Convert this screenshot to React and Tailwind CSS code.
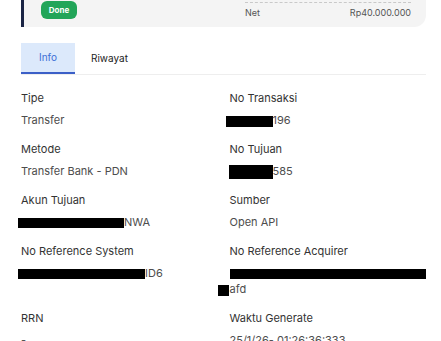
const Redact = ({ className }) => (
  <span className={`inline-block bg-black align-middle ${className}`}></span>
)

const Field = ({ label, children }) => (
  <div>
    <div className="text-[11px] leading-[17px] text-[#333]">{label}</div>
    <div className="mt-[5px] text-[11px] leading-[17px] text-[#4d4d4d]">{children}</div>
  </div>
)

const App = () => {
  return (
    <div className="w-[441px] h-[341px] overflow-hidden bg-white font-['Inter',sans-serif]">
      <div className="pl-[21px] pr-[15px]">
        {/* Summary card (scrolled) */}
        <div className="h-[27px] flex justify-between bg-[#f4f4f4] border-l-[3px] border-[#1b2545] rounded-br-xl pl-[17px] pr-[15px]">
          <div className="mt-[1px] h-[18px] w-[36px] rounded-md bg-[#22a559] flex items-center justify-center text-[8px] font-bold text-white">
            Done
          </div>
          <div className="w-[166px] mt-[2px]">
            <div className="border-t border-dashed border-[#c9c9c9]"></div>
            <div className="flex justify-between text-[9px] leading-[12px] text-[#555] mt-[4px]">
              <span>Net</span>
              <span>Rp40.000.000</span>
            </div>
          </div>
        </div>

        {/* Tabs */}
        <div className="mt-[16px] flex border-b border-[#eeeeee]">
          <div className="h-[31px] w-[54px] bg-[#dce9fb] border-b-2 border-[#3b5fc7] flex items-center justify-center text-[10px] text-[#3d6fd6] -mb-px">
            Info
          </div>
          <div className="h-[31px] px-[16px] flex items-center text-[10px] text-[#222]">
            Riwayat
          </div>
        </div>

        {/* Fields */}
        <div className="mt-[15px] grid grid-cols-2 gap-x-3 gap-y-[12px]">
          <Field label="Tipe">Transfer</Field>
          <Field label="No Transaksi">
            <Redact className="w-[47px] h-[11px] -ml-[4px]" />196
          </Field>
          <Field label="Metode">Transfer Bank - PDN</Field>
          <Field label="No Tujuan">
            <Redact className="w-[44px] h-[14px] -ml-[1px]" />585
          </Field>
          <Field label="Akun Tujuan">
            <Redact className="w-[106px] h-[10px] -ml-[3px]" />NWA
          </Field>
          <Field label="Sumber">Open API</Field>
          <Field label="No Reference System">
            <Redact className="w-[127px] h-[10px] -ml-[3px]" />ID6
          </Field>
          <Field label="No Reference Acquirer">
            <div className="leading-[16px]">
              <Redact className="w-[196px] h-[10px]" />
            </div>
            <div>
              <Redact className="w-[11px] h-[11px] -ml-[12px] mr-[1px]" />afd
            </div>
          </Field>
          <Field label="RRN">-</Field>
          <Field label="Waktu Generate">25/1/26- 01:26:36:333</Field>
        </div>
      </div>
    </div>
  )
}

export default App
